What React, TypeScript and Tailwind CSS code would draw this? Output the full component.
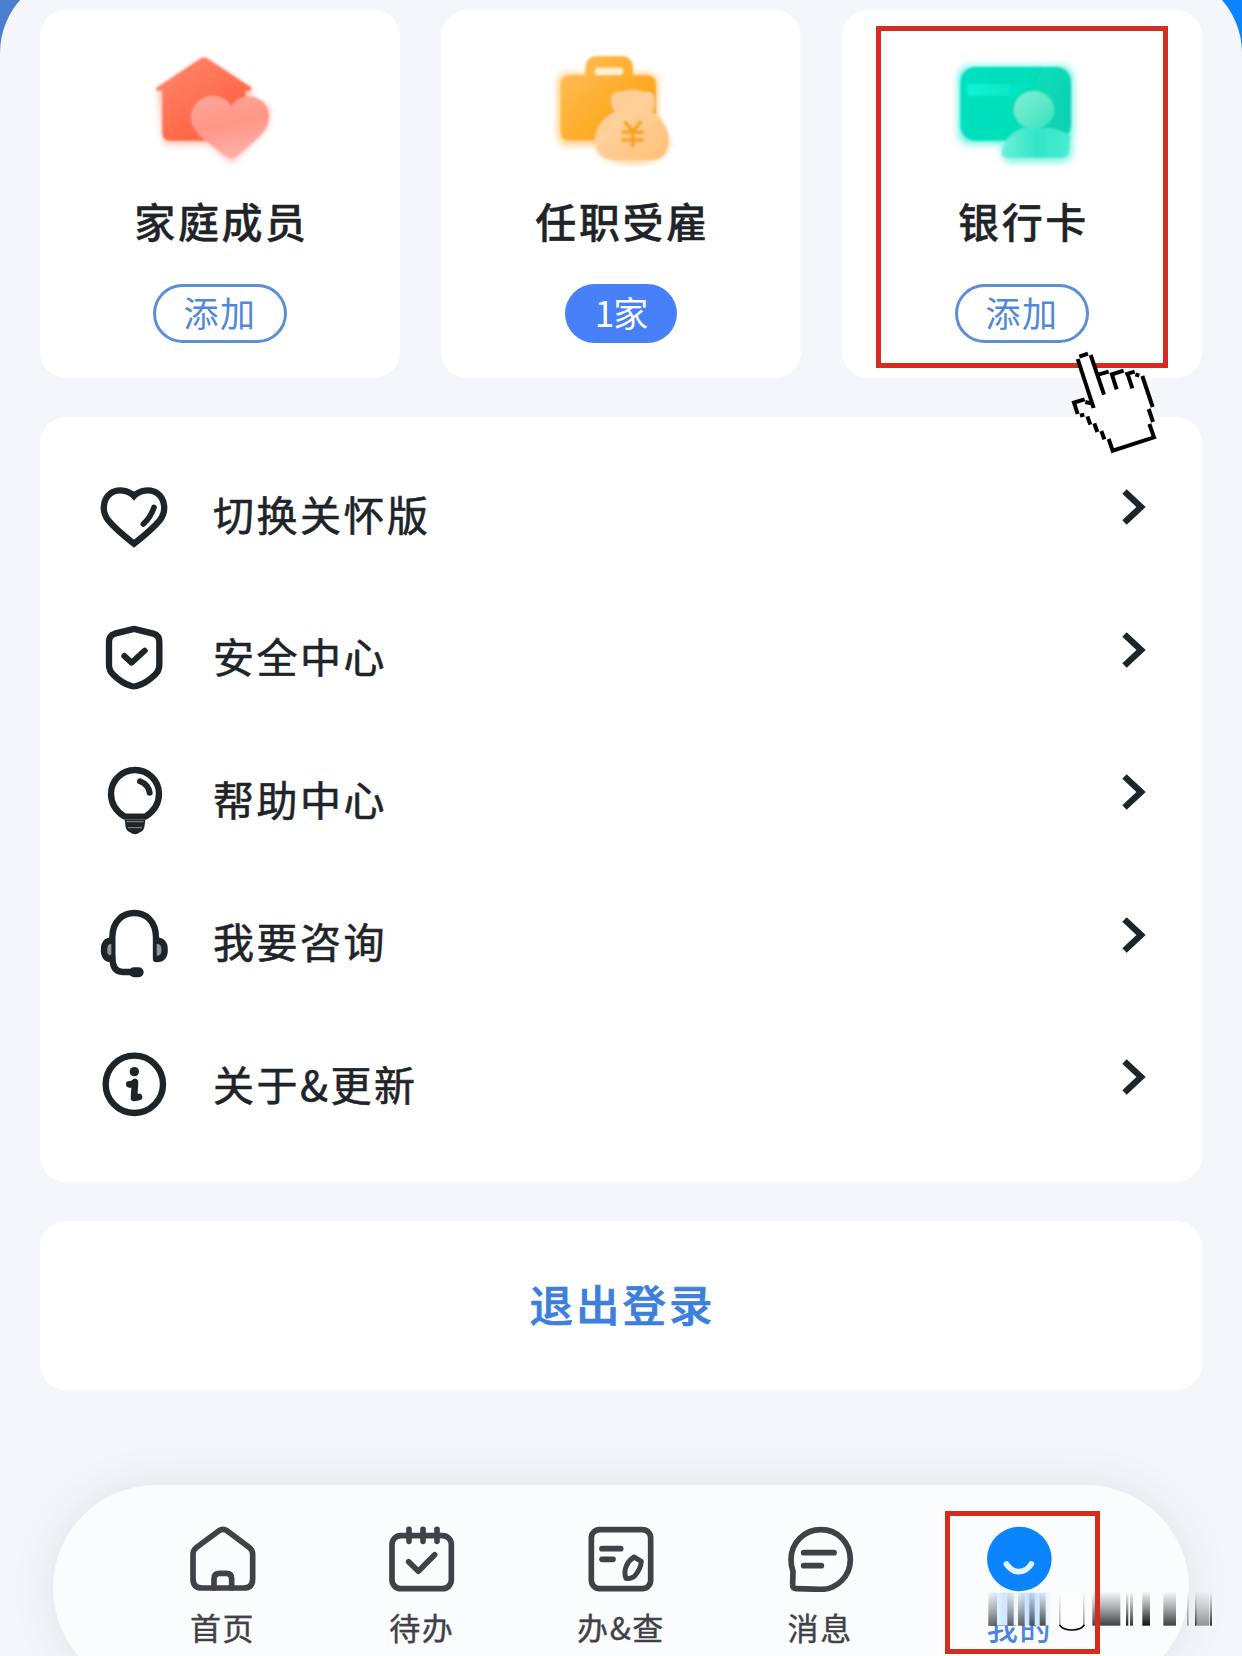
import type { ReactNode } from "react";
import clsx from "clsx";

/* ── Top card icons ── */
function FamilyIcon() {
  return (
    <svg viewBox="450 150 420 351" className="w-[140px] h-[117px]">
      <defs>
        <linearGradient id="house" x1="0" y1="0" x2="0.8" y2="1">
          <stop offset="0" stopColor="#ff8a70" />
          <stop offset="0.75" stopColor="#ff6647" />
        </linearGradient>
        <linearGradient id="heart" x1="0.2" y1="0" x2="0.5" y2="1">
          <stop offset="0" stopColor="#ffa597" />
          <stop offset="0.5" stopColor="#ff9688" />
          <stop offset="1" stopColor="#ffb0a6" />
        </linearGradient>
        <filter id="glow" x="-20%" y="-20%" width="140%" height="140%">
          <feGaussianBlur stdDeviation="11" />
        </filter>
        <filter id="soft">
          <feGaussianBlur stdDeviation="2.8" />
        </filter>
      </defs>
      <g filter="url(#glow)" opacity="0.75">
        <path d="M475 272 L610 175 L755 270 V432 H492 Z" fill="#ffa793" />
        <path d="M695 490 L585 396 V320 L690 330 L806 316 V376 Z" fill="#ffa79f" />
      </g>
      <g filter="url(#soft)">
        <path
          d="M600 177 Q612 170 624 177 L752 262 Q760 270 746 272 H736 V422 H512 Q487 422 487 398 V272 H472 Q462 269 472 262 Z"
          fill="url(#house)"
        />
        <path
          d="M694 318 C672 284 628 280 600 300 C562 332 566 376 602 410 L674 466 Q694 482 714 466 L776 412 C812 376 818 330 786 302 C756 282 714 286 694 318 Z"
          fill="url(#heart)"
        />
      </g>
    </svg>
  );
}

function JobIcon() {
  return (
    <svg viewBox="394 150 420 351" className="w-[140px] h-[117px]">
      <defs>
        <linearGradient id="case" x1="0" y1="0" x2="1" y2="0.8">
          <stop offset="0" stopColor="#ffbf5e" />
          <stop offset="0.6" stopColor="#ffac28" />
          <stop offset="1" stopColor="#f9a21c" />
        </linearGradient>
        <linearGradient id="bag" x1="0" y1="0" x2="1" y2="1">
          <stop offset="0" stopColor="#ffc98d" />
          <stop offset="0.4" stopColor="#ffd09a" />
          <stop offset="1" stopColor="#ffbf73" />
        </linearGradient>
      </defs>
      <g filter="url(#glow)" opacity="0.75">
        <rect x="414" y="220" width="300" height="216" rx="28" fill="#ffc163" />
        <ellipse cx="638" cy="430" rx="112" ry="64" fill="#ffcd8a" />
      </g>
      <g filter="url(#soft)">
        <path
          d="M536 168 H602 Q640 168 640 206 V226 H680 Q709 226 709 255 V394 Q709 421 680 421 H453 Q423 421 423 392 V255 Q423 226 452 226 H497 V206 Q497 168 536 168 Z"
          fill="url(#case)"
        />
        <rect x="526" y="203" width="84" height="22" rx="10" fill="#fff0d0" />
        <path
          d="M574 300 Q574 272 604 276 Q638 262 672 276 Q706 272 704 300 Q706 322 698 336 Q746 366 747 424 Q744 480 694 480 H584 Q526 478 526 414 Q534 358 586 336 Q574 318 574 300 Z"
          fill="url(#bag)"
        />
        <path
          d="M614 364 L639 394 L664 364 M639 394 V442 M606 397 H672 M606 420 H672"
          fill="none"
          stroke="#f9a51a"
          strokeWidth="12"
        />
      </g>
    </svg>
  );
}

function BankIcon() {
  return (
    <svg viewBox="366 150 420 351" className="w-[140px] h-[117px]">
      <defs>
        <linearGradient id="card" x1="0" y1="0" x2="1" y2="0.3">
          <stop offset="0" stopColor="#05dfc0" />
          <stop offset="0.6" stopColor="#04e0bb" />
          <stop offset="1" stopColor="#0fd3b2" />
        </linearGradient>
        <linearGradient id="stripe">
          <stop offset="0" stopColor="#0cf5d6" />
          <stop offset="1" stopColor="#0cf5d6" stopOpacity="0" />
        </linearGradient>
        <linearGradient id="head" x1="0" y1="0" x2="1" y2="1">
          <stop offset="0" stopColor="#86efd4" />
          <stop offset="1" stopColor="#35e2c0" />
        </linearGradient>
        <linearGradient id="body">
          <stop offset="0" stopColor="#6bf0da" />
          <stop offset="0.5" stopColor="#35e5c8" />
          <stop offset="1" stopColor="#47ecd2" />
        </linearGradient>
      </defs>
      <g filter="url(#glow)" opacity="0.8">
        <rect x="384" y="197" width="346" height="236" rx="36" fill="#4df0da" />
        <rect x="514" y="400" width="214" height="88" rx="30" fill="#69f2df" />
      </g>
      <g filter="url(#soft)">
        <rect x="391" y="201" width="332" height="221" rx="46" fill="url(#card)" />
        <rect x="412" y="252" width="190" height="36" rx="10" fill="url(#stripe)" />
        <path
          d="M516 460 Q520 408 580 384 H660 Q704 392 722 410 Q718 420 718 444 Q718 473 690 473 H534 Q516 473 516 460 Z"
          fill="url(#body)"
        />
        <ellipse cx="612" cy="330" rx="60" ry="56" fill="url(#head)" />
      </g>
    </svg>
  );
}

/* ── Menu icons, dark outlines on an 80px box ── */
function MenuIcon({ viewBox, children }: { viewBox: string; children: ReactNode }) {
  return (
    <svg
      viewBox={viewBox}
      className="w-20 h-20 flex-shrink-0"
      fill="none"
      stroke="#1f2429"
      strokeWidth="19"
      strokeLinecap="round"
      strokeLinejoin="round"
    >
      {children}
    </svg>
  );
}

const menu = [
  {
    label: "切换关怀版",
    icon: (
      <MenuIcon viewBox="42 45 240 240">
        <path
          strokeLinejoin="miter"
          d="M162 108 C146 90 112 85 92 100 C66 120 66 156 84 180 C100 200 130 226 162 251 C194 226 224 200 240 180 C258 156 258 120 232 100 C212 85 178 90 162 108 Z"
        />
        <path d="M222 142 Q212 172 190 192" strokeWidth="17" />
      </MenuIcon>
    ),
  },
  {
    label: "安全中心",
    icon: (
      <MenuIcon viewBox="42 472 240 240">
        <path d="M156 506 L104 519 Q87 524 87 544 V612 Q87 630 100 642 Q126 668 154 676 Q162 678 170 676 Q198 668 225 642 Q238 630 238 612 V544 Q238 524 220 519 L168 506 Q162 504 156 506 Z" />
        <path d="M133 586 L155 606 L194 570" strokeWidth="18" />
      </MenuIcon>
    ),
  },
  {
    label: "帮助中心",
    icon: (
      <MenuIcon viewBox="42 60 240 240">
        <path d="M134 230 Q93 204 93 161 A72 71 0 0 1 237 161 Q237 204 196 230 Z" />
        <path d="M180 124 Q205 134 209 158" strokeWidth="18" />
        <path
          d="M134 240 H196 L193 262 Q190 274 180 277 Q165 289 150 277 Q140 274 137 262 Z"
          fill="#1f2429"
          stroke="none"
        />
        <path d="M140 245 H190 M145 263 H185" stroke="#8b9095" strokeWidth="3" />
      </MenuIcon>
    ),
  },
  {
    label: "我要咨询",
    icon: (
      <MenuIcon viewBox="42 487 240 240">
        <path d="M97 656 V590 C97 540 130 517 163 517 C196 517 228 540 228 590 V654" />
        <path d="M94 600 Q72 600 72 628 Q72 655 94 655" fill="#8f969c" />
        <path d="M230 600 Q254 600 254 628 Q254 655 230 655" fill="#8f969c" />
        <path d="M97 650 Q97 694 128 694 H178" />
        <path d="M162 695 H176" strokeWidth="30" />
      </MenuIcon>
    ),
  },
  {
    label: "关于&更新",
    icon: (
      <MenuIcon viewBox="42 915 240 240">
        <circle cx="163" cy="1033" r="86" />
        <circle cx="163" cy="995" r="14" fill="#1f2429" stroke="none" />
        <path d="M148 1033 Q160 1033 165 1026 L162 1074 L177 1071" strokeWidth="20" />
      </MenuIcon>
    ),
  },
];

/* ── Tab bar icons ── */
function TabIcon({ viewBox, children }: { viewBox: string; children: ReactNode }) {
  return (
    <svg
      viewBox={viewBox}
      className="w-20 h-[68px]"
      fill="none"
      stroke="#404247"
      strokeWidth="17"
      strokeLinecap="round"
      strokeLinejoin="round"
    >
      {children}
    </svg>
  );
}

const tabs = [
  {
    label: "首页",
    icon: (
      <TabIcon viewBox="548 190 240 204">
        <path d="M656 210 Q668 202 680 210 L746 260 Q757 268 757 282 V354 Q757 382 730 382 H606 Q578 382 578 354 V282 Q578 268 589 260 Z" />
        <path d="M641 382 V354 Q641 338 658 338 H678 Q694 338 694 354 V382" />
      </TabIcon>
    ),
  },
  {
    label: "待办",
    icon: (
      <TabIcon viewBox="35 190 240 204">
        <rect x="65" y="225" width="178" height="159" rx="26" />
        <path d="M116 206 V242 M158 206 V242 M200 206 V242" />
        <path d="M115 303 L144 332 L193 282" />
      </TabIcon>
    ),
  },
  {
    label: "办&查",
    icon: (
      <TabIcon viewBox="634 190 240 204">
        <rect x="665" y="207" width="178" height="177" rx="25" />
        <path d="M697 264 H753 M697 296 H730" />
        <path d="M793 289 L815 302 Q813 326 794 347 Q780 356 769 353 Q762 334 770 316 Q778 298 793 289 Z" strokeWidth="15" />
      </TabIcon>
    ),
  },
  {
    label: "消息",
    icon: (
      <TabIcon viewBox="271 190 240 204">
        <path d="M394 207 C444 207 482 246 482 297 C482 346 442 386 394 386 L320 384 Q308 384 309 372 L310 332 Q304 314 304 297 C304 246 344 207 394 207 Z" />
        <path d="M342 276 H433 M342 315 H395" />
      </TabIcon>
    ),
  },
  {
    label: "我的",
    active: true,
    icon: (
      <TabIcon viewBox="149 189 240 204">
        <circle cx="270" cy="294" r="97" fill="#0a84ff" stroke="none" />
        <path d="M231 309 Q248 333 270 332 Q292 331 306 309" stroke="#e4f3ff" />
      </TabIcon>
    ),
  },
];

/* ── Dark stripes fading upwards over the tab label: x, width, opacity ── */
const stripes = [
  [175, 26, 0.6],
  [232, 19, 0.6],
  [264, 20, 0.6],
  [298, 16, 0.65],
  [329, 18, 0.7],
  [387, 5, 0.3],
  [459, 5, 0.4],
  [487, 84, 0.75],
  [588, 7, 0.9],
  [600, 9, 0.8],
  [637, 23, 0.95],
  [700, 38, 0.75],
  [771, 5, 0.4],
  [795, 5, 0.8],
  [800, 38, 0.4],
  [840, 6, 0.8],
];

function Stripes() {
  return (
    <svg viewBox="165 390 690 129" className="absolute left-[985px] top-[1590px] w-[230px] h-[43px]">
      <defs>
        <linearGradient id="fade" x1="0" y1="0" x2="0" y2="1">
          <stop offset="0" stopColor="#000" stopOpacity="0" />
          <stop offset="0.5" stopColor="#000" stopOpacity="0.45" />
          <stop offset="1" stopColor="#000" />
        </linearGradient>
        <linearGradient id="haze" x1="0" y1="0" x2="1" y2="0">
          <stop offset="0" stopColor="#fbfcfe" />
          <stop offset="0.25" stopColor="#cfe6ff" />
          <stop offset="0.45" stopColor="#f2f8ff" />
          <stop offset="0.65" stopColor="#bedcff" />
          <stop offset="0.85" stopColor="#e2f0ff" />
          <stop offset="1" stopColor="#fbfcfe" />
        </linearGradient>
        <filter id="smear" x="-2%" y="0" width="104%" height="100%">
          <feGaussianBlur stdDeviation="1.8 0" />
        </filter>
      </defs>
      <rect x="175" y="398" width="194" height="98" fill="url(#haze)" />
      <path d="M385 400 H465 V494 Q425 528 385 494 Z" fill="#fdfdfe" />
      <g filter="url(#smear)">
        {stripes.map(([x, w, o]) => (
          <rect key={x} x={x} y="394" width={w} height="103" fill="url(#fade)" opacity={o} />
        ))}
      </g>
      <path d="M388 495 Q400 510 426 510 Q452 510 463 495" fill="none" stroke="#000" strokeWidth="5" />
    </svg>
  );
}

/* ── Pixel hand pointer ── */
function HandPointer() {
  return (
    <svg viewBox="720 360 270 315" className="absolute left-[1070px] top-[350px] w-[90px] h-[105px]">
      <path
        d="M742 388 L750 374 L774 370 L786 380 L804 430 L834 424 L846 434 L878 422 L892 432 L912 426 L940 440 L968 530 L962 575 L974 624 L848 664 L820 625 L796 600 L776 576 L742 550 L730 518 L762 508 L778 520 Z"
        fill="#fff"
      />
      <g fill="none" stroke="#000" strokeWidth="12">
        <path d="M748 380 L774 371" />
        <path d="M743 387 L791 534" />
        <path d="M782 375 L822 494" />
        <path d="M804 434 L836 425" />
        <path d="M840 435 L881 422 M846 434 L860 478" />
        <path d="M886 433 L914 425 M893 432 L907 475" />
        <path d="M916 433 L928 437" />
        <path d="M937 438 L968 531" />
        <path d="M956 537 L969 576" />
        <path d="M958 582 L972 622 L848 662 L836 627" />
        <path d="M764 508 L732 518 L743 552" />
        <path d="M766 516 L783 520" />
        <path d="M750 557 L763 554" />
        <path d="M772 559 L781 584" />
        <path d="M793 580 L802 606" />
        <path d="M814 603 L823 628" />
      </g>
    </svg>
  );
}

const cards = [
  { title: "家庭成员", badge: "添加", icon: <FamilyIcon /> },
  { title: "任职受雇", badge: "1家", filled: true, icon: <JobIcon /> },
  { title: "银行卡", badge: "添加", icon: <BankIcon /> },
];

export default function App() {
  return (
    <div className="relative w-[1242px] h-[1656px] overflow-hidden bg-linear-to-r from-[#4a7fd0] to-[#0a84ff] font-['Noto_Sans_CJK_SC',sans-serif]">
      <div className="-mt-[27px] h-[1683px] rounded-t-[80px] bg-[#f5f6fb] px-10 pt-[37px]">
        <section className="grid grid-cols-3 gap-[41px]">
          {cards.map((c) => (
            <div key={c.title} className="h-[368px] rounded-[26px] bg-white pt-10 flex flex-col items-center">
              {c.icon}
              <h2 className="mt-[23px] h-[60px] pl-[3px] text-[41px] leading-[60px] tracking-[2.6px] font-medium text-[#1f2429] [-webkit-text-stroke:0.4px_#1f2429]">
                {c.title}
              </h2>
              <span
                className={clsx(
                  "mt-[34px] h-[59px] pb-[4px] rounded-full flex items-center justify-center text-[35px] leading-none",
                  c.filled
                    ? "w-[112px] bg-[#4880fa] text-white tracking-[-1px]"
                    : "w-[134px] border-[3px] border-[#5b8fd6] text-[#5288d8] tracking-[1.5px]"
                )}
              >
                {c.badge}
              </span>
            </div>
          ))}
        </section>

        <section className="mt-[39px] h-[765px] rounded-[26px] bg-white pt-[27px] pl-[54px] pr-[56px]">
          {menu.map((m) => (
            <div key={m.label} className="h-[142.5px] flex items-center">
              {m.icon}
              <span className="ml-[39px] mb-1 flex-1 text-[41px] leading-none tracking-[2.5px] text-[#1f2429] [-webkit-text-stroke:0.6px_#1f2429]">
                {m.label}
              </span>
              <svg viewBox="0 0 25 40" className="w-[25px] h-10 mb-4" fill="none" stroke="#1f2429" strokeWidth="6.4">
                <path d="M3.5 4.5 L20 20 L3.5 35.5" />
              </svg>
            </div>
          ))}
        </section>

        <button className="mt-[39px] w-full h-[169px] pb-1 pl-[3px] rounded-[26px] bg-white text-center text-[43.5px] leading-none tracking-[3px] font-medium text-[#3d7fdd] [-webkit-text-stroke:0.7px_#3d7fdd]">
          退出登录
        </button>

        <nav className="mt-[95px] ml-[13px] mr-[13px] h-[206px] rounded-full bg-[#fbfcfe] px-[70px] pt-[39px] flex shadow-[0_0_44px_rgba(60,60,90,0.1)]">
          {tabs.map((t) => (
            <div key={t.label} className="flex-1 flex flex-col items-center">
              {t.icon}
              <span
                className={clsx(
                  "mt-[19px] text-[31px] leading-none tracking-[1.6px]",
                  t.active ? "text-[#4a86e0] font-medium" : "text-[#404247] [-webkit-text-stroke:0.4px_#404247]"
                )}
              >
                {t.label}
              </span>
            </div>
          ))}
        </nav>
      </div>

      {/* Highlight frames and pointer over the page */}
      <div className="absolute left-[876px] top-[26px] w-[292px] h-[342px] border-[5px] border-[#d32d1f]" />
      <Stripes />
      <div className="absolute left-[945px] top-[1511px] w-[155px] h-[143px] border-[5px] border-[#d32d1f]" />
      <HandPointer />
    </div>
  );
}
